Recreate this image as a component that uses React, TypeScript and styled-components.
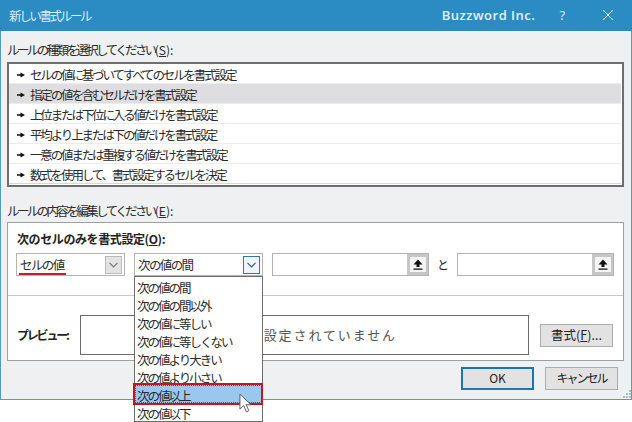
import React from "react";
import styled, { createGlobalStyle } from "styled-components";

const Global = createGlobalStyle`
  html, body { margin: 0; padding: 0; background: #fff; overflow: hidden; }
  body { width: 632px; height: 422px; font-family: "Noto Sans CJK JP", "Liberation Sans", sans-serif; color: #2b2b2b; }
  * { box-sizing: border-box; }
`;

const Window = styled.div`
  position: relative;
  width: 632px;
  height: 400px;
  display: flex;
  flex-direction: column;
  background: #eef0f1;
  border: 1px solid #4f9cc4;
  border-top: none;
`;

const TitleBar = styled.div`
  height: 31px;
  margin: 0 -1px;
  background: #2b8cc4;
  display: flex;
  align-items: center;
  padding: 0 19px 0 9px;
  color: #dcecf6;
`;

const WindowTitle = styled.span`
  font-size: 12.5px;
  letter-spacing: -2.35px;
  flex: 1;
`;

const Brand = styled.span`
  font-family: "Open Sans", sans-serif;
  font-size: 13px;
  font-weight: 600;
  letter-spacing: 0.5px;
  color: #e6f1f8;
  margin-bottom: 2px;
`;

const Help = styled.span`
  font-family: "Open Sans", sans-serif;
  font-size: 13px;
  margin-left: 24px;
  margin-right: 38px;
  margin-bottom: 2px;
  color: #e6f1f8;
`;

const CloseIcon = styled.svg`
  width: 10px;
  height: 10px;
  margin-bottom: 2px;
`;

const Body = styled.div`
  flex: 1;
  display: flex;
  flex-direction: column;
  padding: 9px 7px 0 6px;
`;

const SectionLabel = styled.div<{ $top?: number }>`
  height: 20px;
  line-height: 20px;
  font-size: 12.5px;
  letter-spacing: -2.6px;
  margin-top: ${(p) => p.$top ?? 0}px;
`;

const AccessKey = styled.span`
  letter-spacing: 0;
  font-size: 12px;
  u { text-underline-offset: 1px; }
`;

const RuleList = styled.div`
  margin-top: 2px;
  height: 125px;
  border: 2px solid #6e6e6e;
  background: #fff;
  padding-right: 1px;
`;

const RuleRow = styled.div<{ $selected?: boolean }>`
  height: 20px;
  display: flex;
  align-items: center;
  padding: 2px 0 0 8px;
  font-size: 12.5px;
  letter-spacing: -2.15px;
  background: ${(p) => (p.$selected ? "#dedee1" : "#fff")};
  border-bottom: 1px solid #ececec;
  &:last-child { border-bottom-color: #d8d8d8; }
`;

const RowMark = styled.svg`
  width: 8px;
  height: 6px;
  margin: 1px 5px 0 0;
  flex: none;
`;

const GroupBox = styled.div`
  margin-top: 1px;
  height: 139px;
  background: #fff;
  border: 1px solid #a0a0a0;
  padding-top: 7px;
`;

const GroupHeading = styled.div`
  height: 18px;
  line-height: 18px;
  padding-left: 9px;
  font-size: 12px;
  font-weight: 700;
  letter-spacing: -0.4px;
  color: #222;
  u { text-underline-offset: 1px; }
`;

const CriteriaRow = styled.div`
  margin-top: 5px;
  padding-left: 8px;
  display: flex;
`;

const Select = styled.div<{ $w: number; $gap?: number }>`
  position: relative;
  width: ${(p) => p.$w}px;
  height: 23px;
  margin-right: ${(p) => p.$gap ?? 0}px;
  border: 1px solid #b4b4b4;
  background: #fff;
  display: flex;
  align-items: center;
  justify-content: space-between;
  padding: 0 1px 0 3px;
  font-size: 12.5px;
  letter-spacing: -1.6px;
`;

const DropButton = styled.div<{ $focus?: boolean }>`
  width: 17px;
  height: 18px;
  margin-right: 1px;
  display: flex;
  align-items: center;
  justify-content: center;
  background: ${(p) => (p.$focus ? "#eef6fb" : "#e3e3e3")};
  border: 1px solid ${(p) => (p.$focus ? "#2a7aa5" : "#b9b9b9")};
`;

const Chevron = styled.svg`
  width: 9px;
  height: 6px;
`;

const RedUnderline = styled.div`
  position: absolute;
  left: 2px;
  bottom: 0;
  width: 47px;
  height: 2px;
  background: #c0202c;
`;

const RefInput = styled.div`
  width: 157px;
  height: 23px;
  display: flex;
  justify-content: flex-end;
  background: #fff;
  border: 1px solid #b4b4b4;
`;

const RefButton = styled.div`
  width: 21px;
  height: 21px;
  background: #f4f4f4;
  border: 3px solid #c6c6c6;
  border-right-width: 2px;
  display: flex;
  align-items: center;
  justify-content: center;
`;

const ArrowUp = styled.svg`
  width: 10px;
  height: 11px;
`;

const And = styled.div`
  width: 28px;
  text-align: center;
  font-size: 12px;
  line-height: 23px;
`;

const Separator = styled.div`
  margin-top: 19px;
  height: 1px;
  background: #c8c8c8;
`;

const PreviewRow = styled.div`
  margin-top: 19px;
  padding: 0 10px 0 9px;
  display: flex;
  align-items: center;
`;

const PreviewLabel = styled.div`
  width: 63px;
  font-size: 12px;
  font-weight: 700;
  letter-spacing: -2.2px;
  color: #222;
  padding-bottom: 1px;
`;

const PreviewBox = styled.div`
  width: 449px;
  height: 40px;
  border: 1px solid #6a6a6a;
  display: flex;
  align-items: center;
  justify-content: center;
  font-size: 13px;
  letter-spacing: 1.9px;
  color: #555;
  padding: 0 0 1px 7px;
`;

const Button = styled.div<{ $primary?: boolean }>`
  width: 73px;
  height: 23px;
  display: flex;
  align-items: center;
  justify-content: center;
  background: #e2e2e2;
  border: ${(p) => (p.$primary ? "2px solid #1b75b0" : "1px solid #adadad")};
  padding-bottom: 2px;
  font-size: 12px;
  letter-spacing: ${(p) => (p.$primary ? "0" : "-2px")};
  color: #222;
`;

const FormatButton = styled(Button)`
  margin-left: 11px;
  letter-spacing: 0;
  font-size: 12.5px;
  u { text-underline-offset: 1px; }
`;

const Footer = styled.div`
  margin-top: 6px;
  padding-right: 6px;
  display: flex;
  justify-content: flex-end;
  gap: 11px;
`;

const Grip = styled.svg`
  position: absolute;
  right: 0;
  bottom: 0;
  width: 10px;
  height: 9px;
`;

const Dropdown = styled.div`
  position: absolute;
  z-index: 2;
  top: 22px;
  left: -1px;
  width: 129px;
  height: 146px;
  background: #fff;
  border: 1px solid #6e6e6e;
`;

const Option = styled.div<{ $active?: boolean }>`
  position: relative;
  height: 18px;
  line-height: 21px;
  padding-left: 2px;
  font-size: 12.5px;
  letter-spacing: -2px;
  color: #2b2b2b;
  background: ${(p) => (p.$active ? "#9ac8ec" : "transparent")};
  ${(p) =>
    p.$active
      ? `&::before { content: ""; position: absolute; inset: 0; border: 1px dotted #3a5a70; }
         &::after { content: ""; position: absolute; inset: -2px -1px -2px -2px; border: 2px solid #c8141e; }`
      : ""}
`;

const Cursor = styled.svg`
  position: absolute;
  z-index: 3;
  left: 104px;
  top: 8px;
  width: 13px;
  height: 20px;
`;

const rules = [
  "セルの値に基づいてすべてのセルを書式設定",
  "指定の値を含むセルだけを書式設定",
  "上位または下位に入る値だけを書式設定",
  "平均より上または下の値だけを書式設定",
  "一意の値または重複する値だけを書式設定",
  "数式を使用して、書式設定するセルを決定",
];

const options = [
  "次の値の間",
  "次の値の間以外",
  "次の値に等しい",
  "次の値に等しくない",
  "次の値より大きい",
  "次の値より小さい",
  "次の値以上",
  "次の値以下",
];

const ChevronIcon = ({ color }: { color: string }) => (
  <Chevron viewBox="0 0 9 6">
    <path d="M0.5 0.8 L4.5 4.8 L8.5 0.8" fill="none" stroke={color} strokeWidth="1.2" />
  </Chevron>
);

const UpIcon = () => (
  <ArrowUp viewBox="0 0 10 11">
    <path d="M5 0.5 L9.5 5.5 L6.5 5.5 L6.5 8 L3.5 8 L3.5 5.5 L0.5 5.5 Z M0.5 9.5 H9.5 V10.8 H0.5 Z" fill="#111" />
  </ArrowUp>
);

export default function App() {
  return (
    <>
      <Global />
      <Window>
        <TitleBar>
          <WindowTitle>新しい書式ルール</WindowTitle>
          <Brand>Buzzword Inc.</Brand>
          <Help>?</Help>
          <CloseIcon viewBox="0 0 10 10">
            <path d="M0 0 L10 10 M10 0 L0 10" stroke="#e6f1f8" strokeWidth="1" />
          </CloseIcon>
        </TitleBar>
        <Body>
          <SectionLabel>
            ルールの種類を選択してください
            <AccessKey>
              (<u>S</u>):
            </AccessKey>
          </SectionLabel>
          <RuleList>
            {rules.map((r, i) => (
              <RuleRow key={r} $selected={i === 1}>
                <RowMark viewBox="0 0 8 6">
                  <path d="M0 2.2 H3.5 V0.4 L8 3 L3.5 5.6 V3.8 H0 Z" fill="#111" />
                </RowMark>
                {r}
              </RuleRow>
            ))}
          </RuleList>
          <SectionLabel $top={14}>
            ルールの内容を編集してください
            <AccessKey>
              (<u>E</u>):
            </AccessKey>
          </SectionLabel>
          <GroupBox>
            <GroupHeading>
              次のセルのみを書式設定(<u>O</u>):
            </GroupHeading>
            <CriteriaRow>
              <Select $w={109} $gap={9}>
                セルの値
                <DropButton>
                  <ChevronIcon color="#777" />
                </DropButton>
                <RedUnderline />
              </Select>
              <Select $w={129} $gap={9}>
                次の値の間
                <DropButton $focus>
                  <ChevronIcon color="#1f5f8a" />
                </DropButton>
                <Dropdown>
                  {options.map((o, i) => (
                    <Option key={o} $active={i === 6}>
                      {o}
                      {i === 6 && (
                        <Cursor viewBox="0 0 14 21">
                          <path d="M1 1 V17 L5 13.2 L8 20 L10.6 18.8 L7.8 12.4 H13 Z" fill="#fff" stroke="#555" strokeWidth="1" />
                        </Cursor>
                      )}
                    </Option>
                  ))}
                </Dropdown>
              </Select>
              <RefInput>
                <RefButton>
                  <UpIcon />
                </RefButton>
              </RefInput>
              <And>と</And>
              <RefInput>
                <RefButton>
                  <UpIcon />
                </RefButton>
              </RefInput>
            </CriteriaRow>
            <Separator />
            <PreviewRow>
              <PreviewLabel>プレビュー:</PreviewLabel>
              <PreviewBox>書式が設定されていません</PreviewBox>
              <FormatButton>
                書式(<u>F</u>)...
              </FormatButton>
            </PreviewRow>
          </GroupBox>
          <Footer>
            <Button $primary>OK</Button>
            <Button>キャンセル</Button>
          </Footer>
        </Body>
        <Grip viewBox="0 0 10 9">
          <path d="M8 0h2v2H8z M5 3h2v2H5z M8 3h2v2H8z M2 6h2v2H2z M5 6h2v2H5z M8 6h2v2H8z" fill="#b8b8b8" />
        </Grip>
      </Window>
    </>
  );
}
